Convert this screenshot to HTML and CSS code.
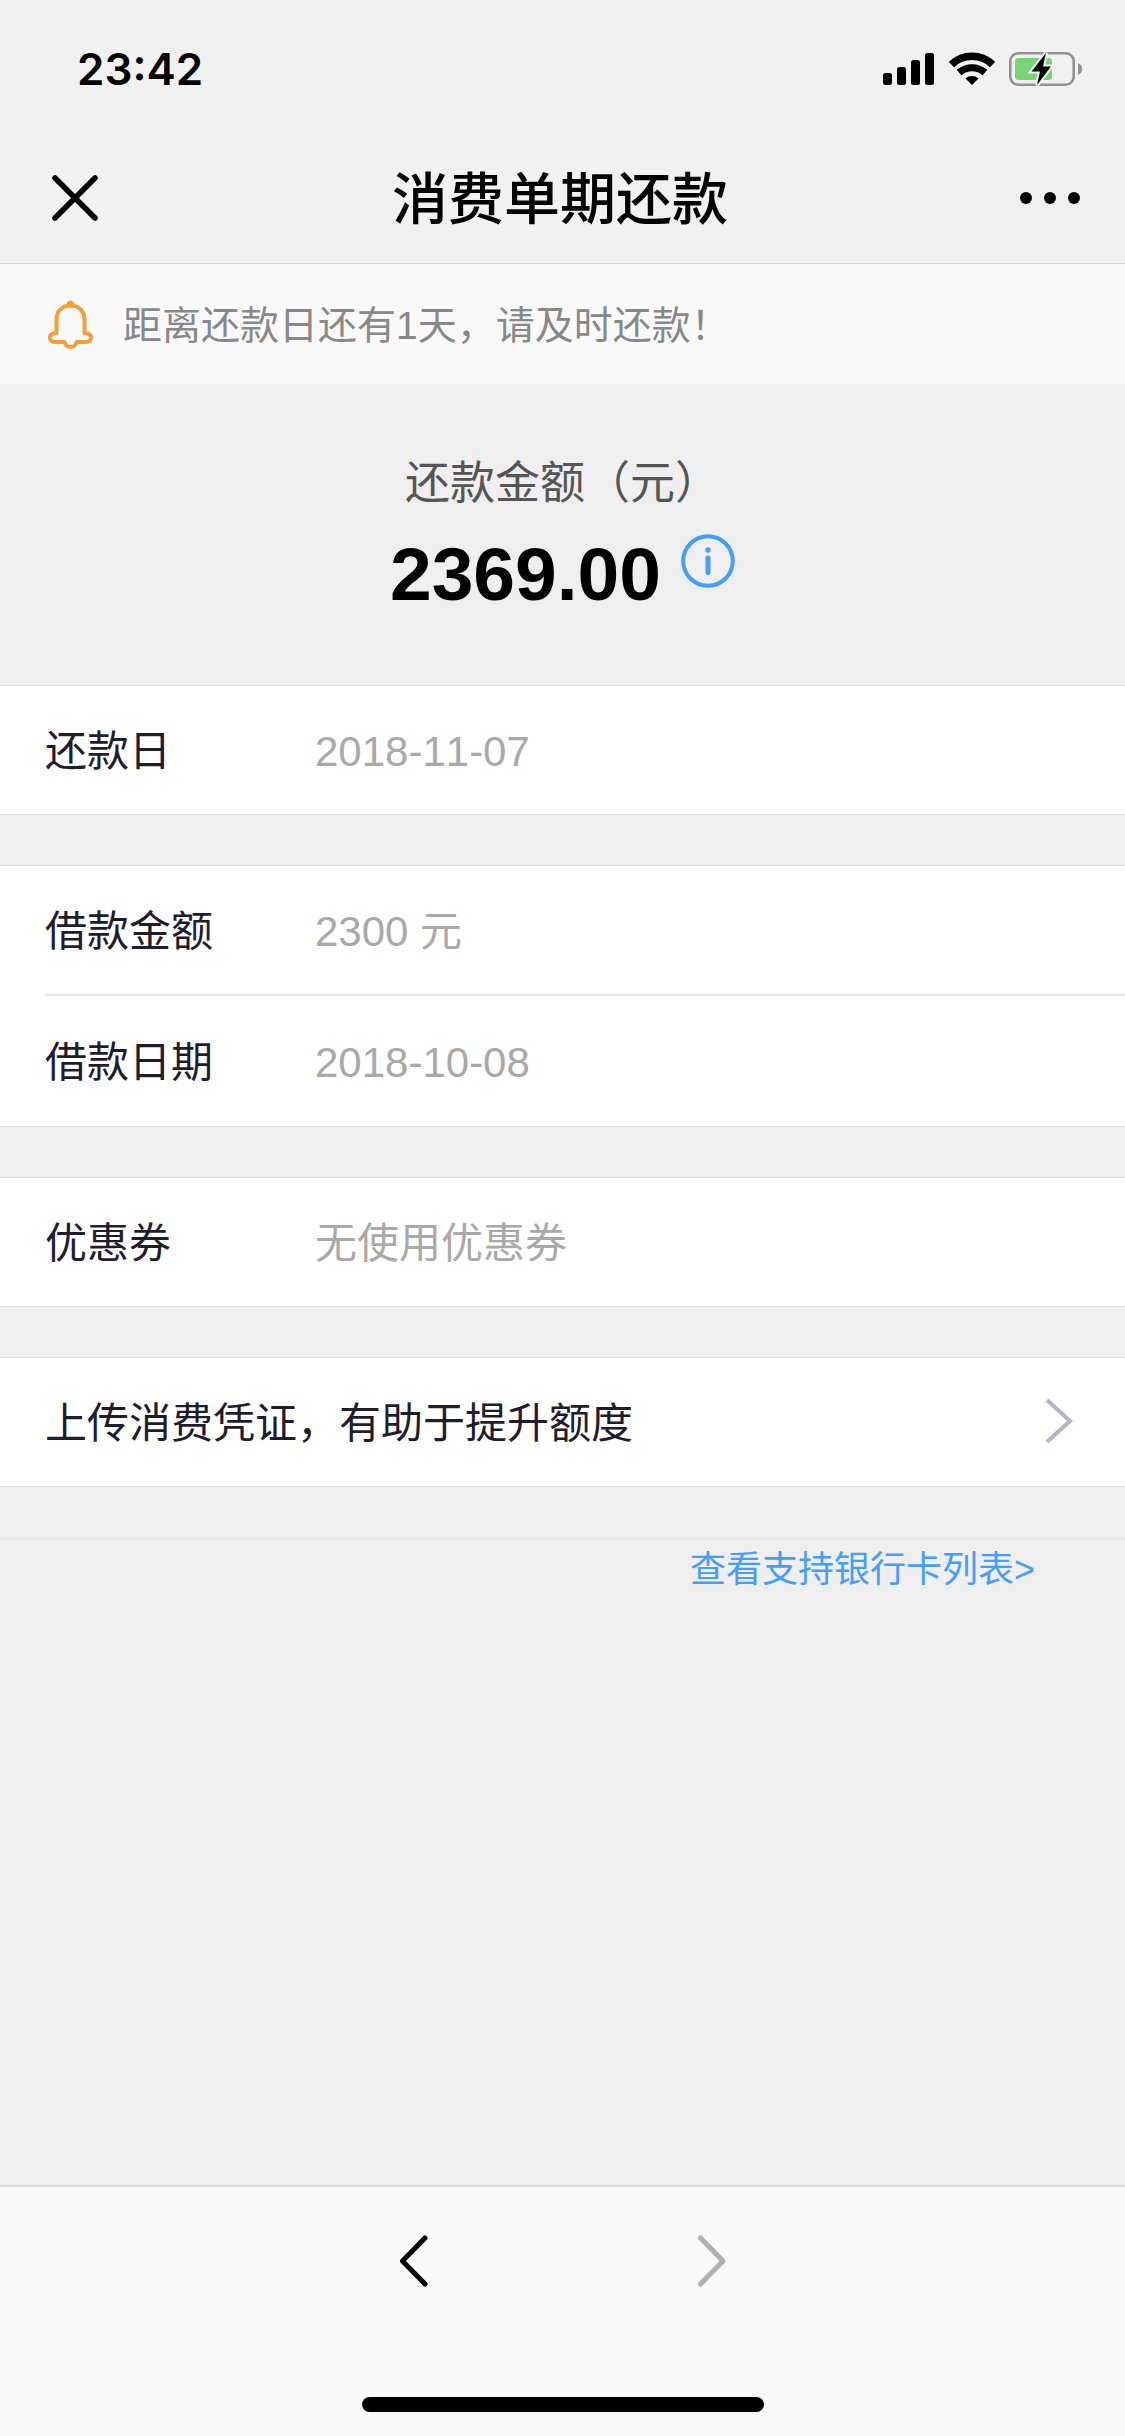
FILE: index.html
```html
<!DOCTYPE html>
<html lang="zh-CN">
	<head>
		<meta charset="UTF-8" />
		<meta name="viewport" content="width=device-width, initial-scale=1.0" />
		<title>消费单期还款</title>
		<link rel="stylesheet" href="styles.css">
	</head>
	<body>
		<header class="header">
			<div class="status">
				<span class="status-time">23:42</span>
				<div class="status-icons">
					<svg viewBox="0 0 52 34" width="52" height="34" aria-hidden="true">
						<rect x="0" y="21" width="9" height="12" rx="2.5" />
						<rect x="14" y="15" width="9" height="18" rx="2.5" />
						<rect x="28" y="8" width="9" height="25" rx="2.5" />
						<rect x="42" y="1" width="9" height="32" rx="2.5" />
					</svg>
					<svg viewBox="0 0 46 34" width="46" height="34" aria-hidden="true">
						<path d="M2.500 12.500C14 1.500 32 1.500 43.500 12.500" fill="none" stroke="#000" stroke-width="7.500" />
						<path d="M10 20.500C17.500 14 28.500 14 36 20.500" fill="none" stroke="#000" stroke-width="7" />
						<path d="M16.500 26.500C20.200 23.200 25.800 23.200 29.500 26.500L23 33Z" />
					</svg>
					<svg viewBox="0 0 74 36" width="74" height="36" aria-hidden="true">
						<rect x="1.300" y="2.300" width="63.400" height="31.400" rx="8" fill="none" stroke="#919191" stroke-width="2.600" />
						<path d="M69 12c5.500 2.500 5.500 9.500 0 12z" fill="#919191" />
						<rect x="6" y="7" width="37" height="22" rx="3.500" fill="#78d672" />
						<path d="M37 2L22.500 20.500H31L28 34 42 15.500H34z" stroke="#f1f1f1" stroke-width="4" />
						<path d="M37 2L22.500 20.500H31L28 34 42 15.500H34z" />
					</svg>
				</div>
			</div>
			<div class="nav">
				<button class="nav-button" type="button" aria-label="关闭">
					<svg viewBox="0 0 46 46" width="46" height="46">
						<path d="M3 3L43 43M43 3L3 43" fill="none" stroke="#000" stroke-width="5.500" stroke-linecap="round" />
					</svg>
				</button>
				<h1 class="nav-title">消费单期还款</h1>
				<button class="nav-button" type="button" aria-label="更多">
					<svg viewBox="0 0 60 46" width="60" height="46">
						<circle cx="6" cy="23" r="6" />
						<circle cx="30" cy="23" r="6" />
						<circle cx="54" cy="23" r="6" />
					</svg>
				</button>
			</div>
		</header>
		<main class="content">
			<div class="notice">
				<svg viewBox="0 0 48 50" width="48" height="50" aria-hidden="true">
					<path d="M9.500 34V21C9.500 12.500 14.500 6.500 23.500 6.500S37.500 12.500 37.500 21v13c4 0 6.500 1.500 6.500 4.500s-2 4.500-5 4.500h-9.500c-.500 3-3 5-6 5s-5.500-2-6-5H8c-3 0-5-1.500-5-4.500s2.500-4.500 6.500-4.500z" fill="none" stroke="#f3a137" stroke-width="4" stroke-linejoin="round" />
					<circle cx="23.500" cy="5" r="3.500" fill="#f3a137" />
				</svg>
				<span class="notice-text">距离还款日还有1天，请及时还款！</span>
			</div>
			<section class="summary">
				<h2 class="summary-label">还款金额（元）</h2>
				<div class="summary-row">
					<strong class="summary-amount">2369.00</strong>
					<button class="info" type="button" aria-label="金额说明">
						<svg viewBox="0 0 54 54" width="54" height="54">
							<circle cx="27" cy="27" r="24.800" fill="none" stroke="#459dfc" stroke-width="4" />
							<circle cx="27" cy="16" r="2.700" fill="#459dfc" />
							<path d="M27 24V38.500" fill="none" stroke="#459dfc" stroke-width="5" stroke-linecap="round" />
						</svg>
					</button>
				</div>
			</section>
			<dl class="group">
				<div class="row">
					<dt class="row-label">还款日</dt>
					<dd class="row-value">2018-11-07</dd>
				</div>
			</dl>
			<dl class="group">
				<div class="row">
					<dt class="row-label">借款金额</dt>
					<dd class="row-value">2300 元</dd>
				</div>
				<div class="row">
					<dt class="row-label">借款日期</dt>
					<dd class="row-value">2018-10-08</dd>
				</div>
			</dl>
			<dl class="group">
				<div class="row">
					<dt class="row-label">优惠券</dt>
					<dd class="row-value">无使用优惠券</dd>
				</div>
			</dl>
			<div class="group">
				<a class="row row-link" href="#upload">
					<span class="row-text">上传消费凭证，有助于提升额度</span>
					<svg viewBox="0 0 28 46" width="28" height="46" aria-hidden="true">
						<path d="M2 1L25 22 2 43" fill="none" stroke="#b4b4c6" stroke-width="4" />
					</svg>
				</a>
			</div>
			<div class="cards">
				<a class="cards-link" href="#cards">查看支持银行卡列表&gt;</a>
			</div>
		</main>
		<footer class="toolbar">
			<div class="toolbar-buttons">
				<button class="toolbar-button" type="button" aria-label="后退">
					<svg viewBox="0 0 28 52" width="28" height="52">
						<path d="M25 3L2.500 26 25 49" fill="none" stroke="#000" stroke-width="5" stroke-linecap="round" stroke-linejoin="round" />
					</svg>
				</button>
				<button class="toolbar-button" type="button" aria-label="前进" disabled>
					<svg viewBox="0 0 28 52" width="28" height="52">
						<path d="M2.500 3L25 26 2.500 49" fill="none" stroke="#b0b0b2" stroke-width="5" stroke-linecap="round" stroke-linejoin="round" />
					</svg>
				</button>
			</div>
			<div class="home-bar"></div>
		</footer>
	</body>
</html>
```
FILE: styles.css
```css
*,
*::before,
*::after {
	box-sizing: border-box;
}
body {
	margin: 0;
	min-height: 100vh;
	display: flex;
	flex-direction: column;
	background-color: #efefef;
	color: #000000;
	font-family: 'Liberation Sans', 'Noto Sans CJK SC', sans-serif;
	font-size: 42px;
	line-height: 60px;
	font-kerning: none;
}
svg {
	display: block;
	flex-shrink: 0;
}
button {
	padding: 0;
	border: 0;
	background: none;
}
a {
	text-decoration: none;
}
.header {
	background-color: #f1f1f1;
	border-bottom: 1px solid #d5d5d5;
}
.status {
	display: flex;
	align-items: center;
	justify-content: space-between;
	height: 132px;
	padding: 6px 42px 0 77px;
}
.status-time {
	font-family: Inter, sans-serif;
	font-size: 44px;
	font-weight: 600;
}
.status-icons {
	display: flex;
	align-items: center;
	gap: 14px;
}
.nav {
	display: grid;
	grid-template-columns: 1fr auto 1fr;
	align-items: center;
	height: 131px;
	padding: 0 45px 0 52px;
}
.nav-title {
	margin: 0;
	padding: 4px 12px 0 0;
	font-size: 56px;
	font-weight: 500;
}
.nav-button {
	justify-self: start;
}
.nav-button:last-child {
	justify-self: end;
}
.content {
	flex-grow: 1;
}
.notice {
	display: flex;
	align-items: center;
	gap: 28px;
	height: 120px;
	padding: 0 47px;
	background-color: #f9f9f9;
	color: #888888;
}
.notice-text {
	padding-top: 4px;
	font-size: 39px;
}
.summary {
	height: 301px;
	padding-top: 70px;
	text-align: center;
}
.summary-label {
	margin: 0;
	color: #555555;
	font-size: 45px;
	font-weight: 400;
}
.summary-row {
	display: flex;
	justify-content: center;
	gap: 20px;
	padding-top: 20px;
}
.summary-amount {
	font-size: 75px;
	line-height: 80px;
}
.info {
	align-self: flex-start;
}
.group {
	margin: 0 0 50px;
	border-top: 1px solid #e2e2e2;
	border-bottom: 1px solid #e6e6e6;
	background-color: #ffffff;
}
.row {
	display: flex;
	align-items: center;
	height: 128px;
	margin-left: 45px;
}
.row + .row {
	height: 132px;
	border-top: 2px solid #e8e8e8;
}
.row-label,
.row-value,
.row-text {
	padding-top: 3px;
}
.row-label {
	width: 270px;
	color: #1f1d2b;
}
.row-value {
	margin: 0;
	color: #a9a9a9;
}
.row-link {
	justify-content: space-between;
	padding-right: 52px;
	color: #1f1d2b;
}
.cards {
	padding: 0 90px;
	border-top: 3px solid #e8e8e8;
	line-height: 56px;
	text-align: right;
}
.cards-link {
	color: #459dfc;
	font-size: 36px;
}
.toolbar {
	padding: 48px 0 24px;
	border-top: 2px solid #d6d6d6;
	background-color: #fafafc;
}
.toolbar-buttons {
	display: flex;
	justify-content: center;
	gap: 270px;
}
.home-bar {
	width: 402px;
	height: 15px;
	margin: 110px auto 0;
	border-radius: 8px;
	background-color: #000000;
}
```
